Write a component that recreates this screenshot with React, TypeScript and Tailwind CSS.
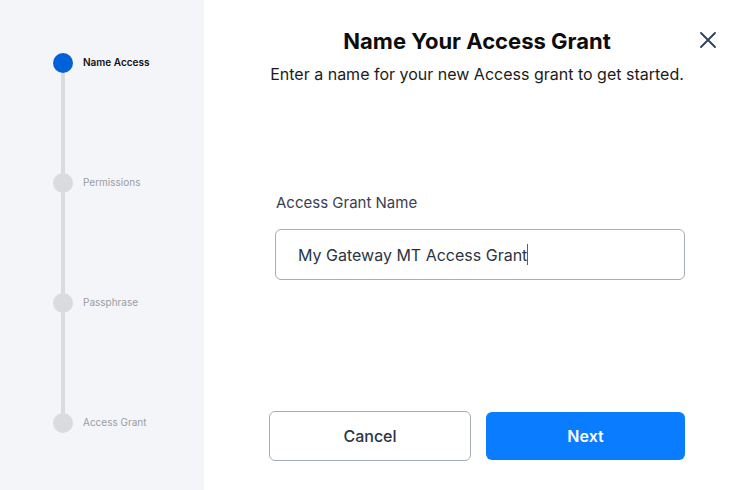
import React from "react";

const steps = [
  { label: "Name Access", active: true },
  { label: "Permissions", active: false },
  { label: "Passphrase", active: false },
  { label: "Access Grant", active: false },
];

export default function App() {
  return (
    <div
      className="flex w-[749px] h-[490px] bg-white overflow-hidden"
      style={{ fontFamily: "Inter, 'Noto Sans', sans-serif" }}
    >
      <aside className="w-[204px] h-full bg-[#f4f5f8] pt-[53px] pl-[53px] flex flex-col">
        {steps.map((s, i) => (
          <div key={s.label} className="flex flex-col">
            <div className="flex items-center h-5">
              <div
                className={
                  s.active
                    ? "w-5 h-5 rounded-full bg-[#0061d8]"
                    : "w-5 h-5 rounded-full bg-[#dadbdf]"
                }
              />
              <span
                className={
                  s.active
                    ? "ml-[10px] -mt-[1px] text-[10px] font-semibold text-[#111111]"
                    : "ml-[10px] -mt-[1px] text-[10px] text-[#9a9ca3]"
                }
              >
                {s.label}
              </span>
            </div>
            {i < steps.length - 1 && (
              <div className="ml-[8px] w-1 h-[100px] bg-[#dadbdf]" />
            )}
          </div>
        ))}
      </aside>
      <main className="relative flex-1 flex flex-col pl-[65px] pr-[64px] pt-[27px]">
        <button className="absolute right-[33px] top-[32px] w-4 h-4 text-[#2d3f5a]">
          <svg viewBox="0 0 16 16" width="16" height="16" fill="none" stroke="currentColor" strokeWidth="1.8" strokeLinecap="round">
            <path d="M1 1L15 15M15 1L1 15" />
          </svg>
        </button>
        <h1 className="text-center text-[22px] leading-[28px] font-bold text-[#0d0d0d]">
          Name Your Access Grant
        </h1>
        <p className="mt-[9px] text-center text-[16px] leading-[20px] text-[#1b1b1b]">
          Enter a name for your new Access grant to get started.
        </p>
        <div className="ml-[6px] mt-[109px] flex flex-col">
          <label className="text-[15px] leading-[20px] text-[#374151] pl-[1px]">
            Access Grant Name
          </label>
          <div className="mt-[16px] h-[51px] w-[410px] rounded-[6px] border border-[#a6adb9] flex items-center pl-[22px] text-[16px] text-[#2b3543]">
            <span>My Gateway MT Access Grant</span>
            <span className="inline-block w-[1px] h-[21px] bg-[#0a6cff]" />
          </div>
        </div>
        <div className="mt-[131px] flex items-center gap-[15px]">
          <button className="w-[202px] h-[50px] rounded-[6px] border border-[#a6adb9] bg-white text-[16px] font-medium text-[#2b3543]">
            Cancel
          </button>
          <button className="w-[199px] h-[48px] rounded-[6px] bg-[#0a7cff] text-[16px] font-semibold text-white">
            Next
          </button>
        </div>
      </main>
    </div>
  );
}
